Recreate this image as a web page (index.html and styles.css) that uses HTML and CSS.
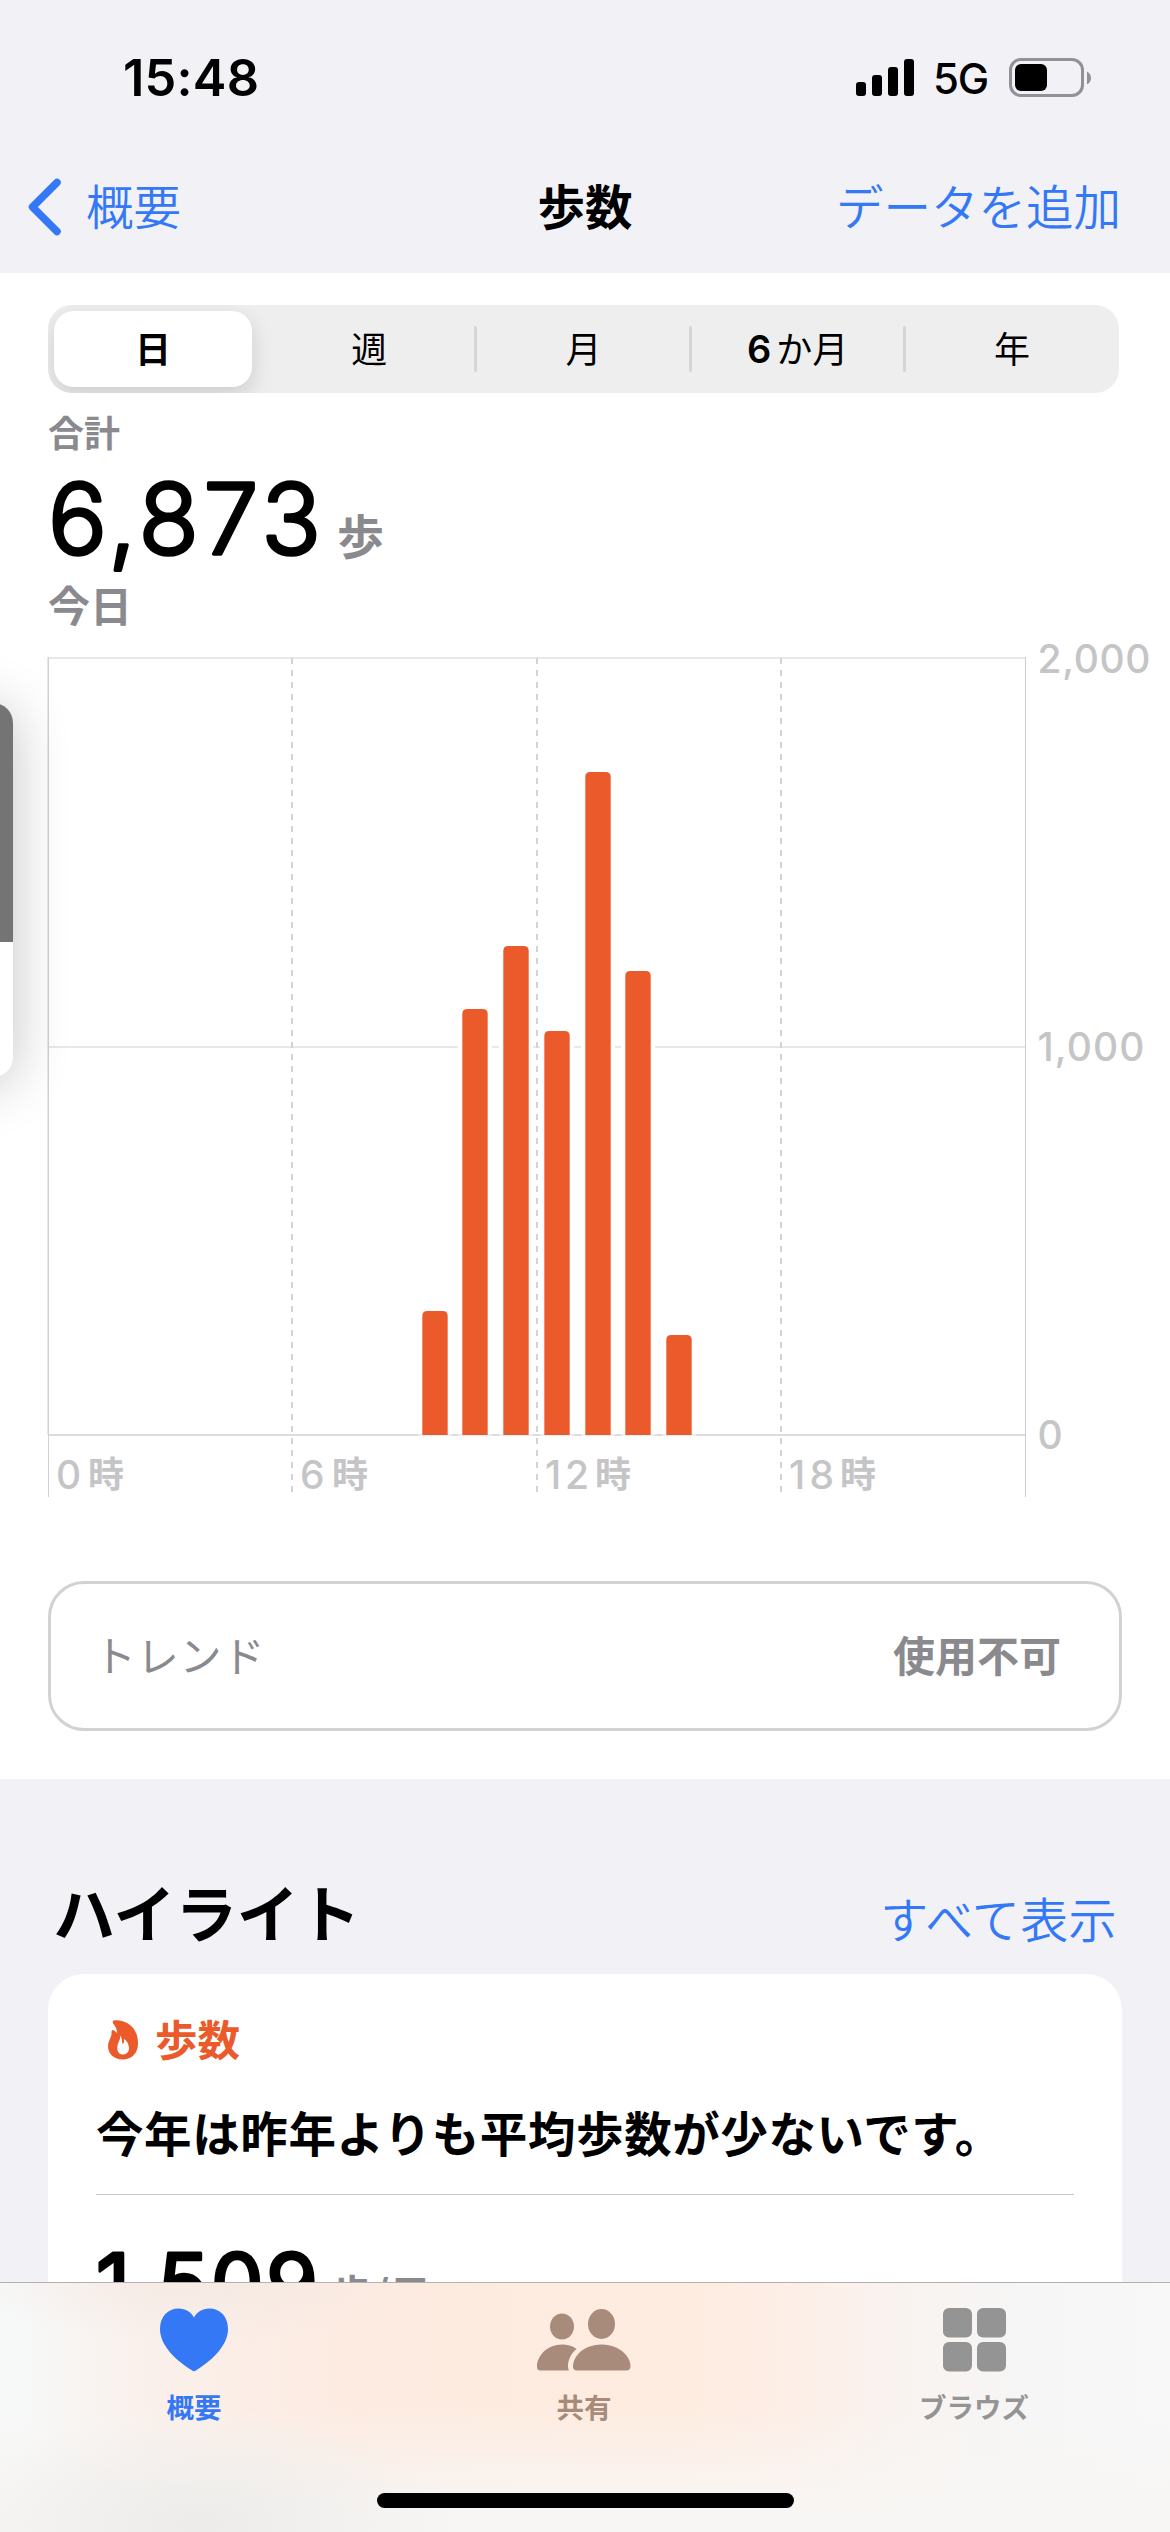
FILE: index.html
```html
<!DOCTYPE html>
<html lang="ja">
<head>
<meta charset="utf-8">
<title>歩数</title>
<link rel="stylesheet" href="styles.css">
</head>
<body>
<div class="screen">
  <header class="top">
    <div class="status">
      <span class="clock">15:48</span>
      <div class="status-right">
        <svg class="signal" viewBox="0 0 58 38" width="58" height="38">
          <rect x="0" y="23" width="10" height="14" rx="3"/>
          <rect x="16" y="16" width="10" height="21" rx="3"/>
          <rect x="32" y="8" width="10" height="29" rx="3"/>
          <rect x="48" y="0" width="10" height="37" rx="3"/>
        </svg>
        <span class="network">5G</span>
        <svg class="battery" viewBox="0 0 83 40" width="83" height="40">
          <rect x="1.5" y="1.5" width="72" height="36" rx="10.5" fill="none" stroke="#929197" stroke-width="3"/>
          <rect x="6" y="6" width="32" height="27" rx="6"/>
          <path d="M78 13.500c5.300 2.500 5.300 10.500 0 13z" fill="#929197"/>
        </svg>
      </div>
    </div>
    <nav class="nav">
      <a class="back">
        <svg viewBox="0 0 36 60" width="36" height="60"><path d="M30 5.500 5.500 30 30 54.500" fill="none" stroke="#3478f6" stroke-width="7.500" stroke-linecap="round" stroke-linejoin="round"/></svg>
        <span>概要</span>
      </a>
      <h1 class="title">歩数</h1>
      <a class="add">データを追加</a>
    </nav>
  </header>

  <main class="panel">
    <div class="segments">
      <span class="seg seg-on">日</span>
      <span class="seg">週</span>
      <span class="seg seg-line">月</span>
      <span class="seg seg-line"><b class="seg-num">6</b>か月</span>
      <span class="seg seg-line">年</span>
    </div>
    <div class="summary">
      <div class="sum-label">合計</div>
      <div class="sum-value">
        <svg class="digits" viewBox="0 0 280 120" width="280" height="120"><text class="big" x="0" y="97.500" font-size="98" textLength="273">6,873</text></svg>
        <span class="unit">歩</span>
      </div>
      <div class="sum-date">今日</div>
    </div>

    <svg class="chart" viewBox="0 630 1170 880" width="1170" height="880">
      <g fill="#e8e8ea">
        <rect x="48" y="657" width="977" height="2"/>
        <rect x="48" y="1046" width="977" height="2"/>
      </g>
      <rect x="48" y="1434" width="977" height="2" fill="#dcdcde"/>
      <rect x="47.500" y="657" width="1.500" height="778" fill="#d1d1d6"/>
      <rect x="48" y="1434" width="1" height="63" fill="#d1d1d6"/>
      <rect x="1025" y="657" width="1" height="840" fill="#cdcdd1"/>
      <g fill="#fff">
        <rect x="458" y="1044" width="34" height="6"/><rect x="499" y="1044" width="34" height="6"/><rect x="540" y="1044" width="34" height="6"/><rect x="581" y="1044" width="34" height="6"/><rect x="621" y="1044" width="34" height="6"/>
      </g>
      <g stroke="#d3d3d7" stroke-width="2" stroke-dasharray="6 6">
        <path d="M292 658V1492"/><path d="M537 658V1492"/><path d="M781 658V1492"/>
      </g>
      <g fill="#fff" opacity=".5">
        <rect x="418" y="1433" width="34" height="4"/><rect x="458" y="1433" width="34" height="4"/><rect x="499" y="1433" width="34" height="4"/><rect x="540" y="1433" width="34" height="4"/><rect x="581" y="1433" width="34" height="4"/><rect x="621" y="1433" width="34" height="4"/><rect x="662" y="1433" width="34" height="4"/>
      </g>
      <g fill="#eb5a2a">
        <path d="M422.300 1435V1316q0-5 5-5h15.400q5 0 5 5V1435z"/>
        <path d="M462.300 1435V1014q0-5 5-5h15.400q5 0 5 5V1435z"/>
        <path d="M503.300 1435V951q0-5 5-5h15.400q5 0 5 5V1435z"/>
        <path d="M544.300 1435V1036q0-5 5-5h15.400q5 0 5 5V1435z"/>
        <path d="M585.300 1435V777q0-5 5-5h15.400q5 0 5 5V1435z"/>
        <path d="M625.300 1435V976q0-5 5-5h15.400q5 0 5 5V1435z"/>
        <path d="M666.300 1435V1340q0-5 5-5h15.400q5 0 5 5V1435z"/>
      </g>
      <g class="axis">
        <text x="1037.500" y="673" textLength="113">2,000</text>
        <text x="1037.500" y="1061" textLength="107">1,000</text>
        <text x="1037.500" y="1449">0</text>
        <text x="56" y="1488.500">0</text><text class="axis-ja" x="88" y="1488">時</text>
        <text x="300" y="1488.500">6</text><text class="axis-ja" x="332" y="1488">時</text>
        <text x="545" y="1488.500" textLength="44">12</text><text class="axis-ja" x="595" y="1488">時</text>
        <text x="789" y="1488.500" textLength="45">18</text><text class="axis-ja" x="840" y="1488">時</text>
      </g>
    </svg>

    <div class="trend"><span class="trend-name">トレンド</span><span class="trend-state">使用不可</span></div>
  </main>

  <section class="highlights">
    <div class="hl-head"><h2 class="hl-title">ハイライト</h2><a class="hl-all">すべて表示</a></div>
    <article class="card">
      <div class="card-kind">
        <svg viewBox="0 0 30 40" width="30" height="40"><path fill="#eb5a2a" fill-rule="evenodd" d="M4.800 1.500C5 .3 6.300.1 8 .2 21 .6 30 9 30 23.500 30 33 24 39.500 14.800 39.500 6 39.500 0 34 0 26c0-4.500 2.600-7.500 3.400-11 .3-1.600-.1-3.200.3-4.300.4-1 2-.6 2.800.1 1 .7 1.800 1.600 2.500 2.300C9 8.500 7 6 5.200 3.800 4.700 3 4.700 2.200 4.800 1.500zM12.200 15.500c.4 2.500-.8 4.700-1.600 6.700-.8 2-1.400 3.800-1.400 5.800 0 4 2.300 6.500 5.800 6.500s6-2.500 6-6.300c0-3.200-1.800-7.500-5-9.500.3 2 0 3.700-.8 5.300-.6-.3-1.100-.9-1.200-1.700.2-2.600-.3-5-1.800-6.800z"/></svg>
        <span>歩数</span>
      </div>
      <p class="card-text">今年は昨年よりも平均歩数が少ないです。</p>
      <div class="card-stat">
        <svg viewBox="0 0 232 90" width="232" height="90"><text class="big stat" x="0" y="80.500" font-size="84" textLength="222">1,509</text></svg>
        <span class="stat-unit">歩/日</span>
      </div>
    </article>
  </section>

  <div class="peek"><div class="peek-image"></div></div>

  <footer class="tabbar">
    <div class="tabs">
      <a class="tab tab-on">
        <svg viewBox="0 0 68 64" width="68" height="64"><path fill="#3478f6" d="M34 63.200c-1 0-2-.7-3-1.400C14 51 0 36.500 0 21 0 8.500 8 .5 18.500.5 26 .5 31 4 34 9.500 37 4 42 .5 49.500.5 60 .5 68 8.500 68 21 68 36.500 54 51 37 61.800c-1 .7-2 1.400-3 1.400z"/></svg>
        <span>概要</span>
      </a>
      <a class="tab tab-share">
        <svg viewBox="0 0 94 64" width="94" height="64" fill="#a88b7a"><ellipse cx="25" cy="18.500" rx="12" ry="13"/><ellipse cx="64.500" cy="16" rx="13.500" ry="15"/><path d="M3.500 62.500C1 62.500 0 61 0 58.500 0 48 10 36.500 25 36.500c6 0 11 1.700 14.500 4.500C34 45.500 31 52 31 58c0 2 .3 3.300 1 4.500z"/><path d="M40 62.500c-3 0-4-1.500-4-4C36 48 47 36.500 64.500 36.500S93.500 48 93.500 58.500c0 2.500-1.500 4-4.500 4z"/></svg>
        <span>共有</span>
      </a>
      <a class="tab tab-browse">
        <svg viewBox="0 0 63 64" width="63" height="64" fill="#959494"><rect x="0" y="0" width="29" height="29.500" rx="6"/><rect x="34" y="0" width="29" height="29.500" rx="6"/><rect x="0" y="34" width="29" height="29.500" rx="6"/><rect x="34" y="34" width="29" height="29.500" rx="6"/></svg>
        <span>ブラウズ</span>
      </a>
    </div>
    <div class="home"></div>
  </footer>
</div>
</body>
</html>
```
FILE: styles.css
```css
* { box-sizing: border-box; }
body {
  margin: 0;
  background: #f2f1f6;
  color: #000;
  font-family: "Noto Sans CJK JP", Inter, sans-serif;
}
.screen {
  position: relative;
  width: 1170px;
  height: 2532px;
  overflow: hidden;
  background: #f2f1f6;
}
h1, h2, p { margin: 0; }
svg { display: block; flex: none; overflow: visible; }

.status {
  display: flex;
  justify-content: space-between;
  height: 141px;
  padding: 48px 78px 0 123px;
}
.clock {
  font: 600 50.500px/60px Inter, sans-serif;
  letter-spacing: 0.2px;
}
.status-right { display: flex; }
.signal { margin: 11px 19px 0 0; }
.network {
  width: 76px;
  font: 500 42px/62px Inter, sans-serif;
  letter-spacing: -1.2px;
}
.battery { margin-top: 10px; }

.nav {
  display: grid;
  grid-template-columns: 1fr auto 1fr;
  align-items: center;
  height: 132px;
  padding: 0 49px 0 27px;
  color: #3478f6;
  font-size: 47.5px;
  line-height: 70px;
}
.nav span, .title, .add { padding-bottom: 5px; }
.back { display: flex; align-items: center; gap: 23px; font-weight: 350; }
.title { color: #000; font-size: 47.5px; font-weight: 700; padding-left: 22px; }
.add { justify-self: end; font-weight: 350; }

.panel {
  height: 1506px;
  padding-top: 32px;
  background: #fff;
}
.segments {
  display: grid;
  grid-template-columns: repeat(5, 1fr);
  width: 1071px;
  height: 88px;
  margin-left: 48px;
  border-radius: 24px;
  background: #eeeeef;
  font-size: 36px;
  line-height: 84px;
  text-align: center;
  overflow: hidden;
}
.seg { position: relative; }
.seg-on {
  height: 76px;
  margin: 6px 10px 0 6px;
  border-radius: 20px;
  background: #fff;
  box-shadow: 0 8px 22px rgba(0, 0, 0, .14);
  font-weight: 700;
  line-height: 72px;
}
.seg-line::before {
  content: "";
  position: absolute;
  left: -2px;
  top: 21px;
  width: 3px;
  height: 46px;
  border-radius: 2px;
  background: #d5d5d8;
}
.seg-num { margin-right: 5px; font: 600 38px/84px Inter, sans-serif; }

.summary { height: 237px; padding: 13px 48px 0; color: #8a8a8e; font-weight: 700; }
.sum-label { height: 50px; font-size: 36px; line-height: 50px; }
.sum-value { display: flex; height: 120px; }
.digits { margin-right: 9px; }
.unit { font-size: 47px; line-height: 156px; }
.sum-date { height: 54px; font-size: 42px; line-height: 56px; }
.big {
  fill: #000;
  stroke: #000;
  stroke-width: 3.500px;
  stroke-linejoin: round;
  font-family: Inter, sans-serif;
  font-weight: 300;
}
.stat { stroke-width: 3px; font-weight: 400; }

.axis { fill: #c5c5c7; font: 500 39px Inter, sans-serif; }
.axis-ja { font: 700 36px "Noto Sans CJK JP", sans-serif; }

.trend {
  display: flex;
  justify-content: space-between;
  width: 1074px;
  height: 150px;
  margin: 71px 0 0 48px;
  padding: 0 58px 0 43px;
  border: 3px solid #d1d1d6;
  border-radius: 36px;
  color: #8a8a8e;
  font-size: 42px;
  line-height: 139px;
}
.trend-name { letter-spacing: 0.8px; }
.trend-state { font-weight: 700; }

.hl-head {
  display: flex;
  align-items: baseline;
  justify-content: space-between;
  height: 195px;
  padding: 87px 53px 0 53px;
}
.hl-title { font-size: 62px; font-weight: 700; line-height: 90px; letter-spacing: -0.3px; }
.hl-all { color: #3478f6; font-size: 48px; font-weight: 350; letter-spacing: 0.4px; }
.card {
  width: 1074px;
  height: 700px;
  margin-left: 48px;
  padding: 34px 48px 0;
  border-radius: 36px;
  background: #fff;
}
.card-kind {
  display: flex;
  align-items: center;
  gap: 17px;
  height: 60px;
  padding-left: 12px;
  color: #eb5a2a;
  font-size: 42.500px;
  font-weight: 700;
  line-height: 60px;
}
.card-kind span { padding-bottom: 1px; }
.card-kind svg { margin-top: 4px; }
.card-text {
  margin-top: 28px;
  padding-bottom: 28px;
  border-bottom: 1px solid #c6c6c8;
  font-size: 47.5px;
  font-weight: 700;
  line-height: 71px;
  height: 99px;
  letter-spacing: 0.6px;
  white-space: nowrap;
}
.card-stat { display: flex; padding-top: 38px; }
.stat-unit { margin-left: 3px; color: #8a8a8e; font-size: 42px; font-weight: 700; line-height: 119px; }

.peek {
  position: absolute;
  left: -187px;
  top: 703px;
  width: 200px;
  height: 374px;
  border-radius: 20px;
  background: #fff;
  box-shadow: 0 6px 56px rgba(0, 0, 0, .24);
  overflow: hidden;
}
.peek-image { height: 239px; background: #747474; }

.tabbar {
  position: absolute;
  left: 0;
  bottom: 0;
  width: 1170px;
  height: 250px;
  border-top: 1px solid #b2b0b1;
  background:
    radial-gradient(ellipse 260px 110px at 200px 240px, rgba(236, 235, 233, .95), rgba(236, 235, 233, 0)),
    radial-gradient(ellipse 230px 60px at 200px 0, rgba(244, 233, 227, .8), rgba(244, 233, 227, 0)),
    linear-gradient(to bottom, rgba(248, 247, 246, 0) 50%, #f8f6f4 92%),
    linear-gradient(to right, #f7f8f8 2%, #faf0eb 13%, #fdebe1 30%, #feece0 58%, #fdeee6 67%, #f9f3f0 77%, #f6f6f6 88%, #f8f8f9 100%);
}
.tabs {
  display: grid;
  grid-template-columns: repeat(3, 390px);
  margin-left: -1px;
  padding-top: 25px;
}
.tab {
  display: flex;
  flex-direction: column;
  align-items: center;
  gap: 14px;
  font-size: 27.500px;
  font-weight: 700;
  line-height: 40px;
}
.tab-on { color: #3478f6; }
.tab-share { color: #a88b7a; }
.tab-browse { color: #959494; }
.home {
  width: 417px;
  height: 15px;
  margin: 67px auto 0;
  border-radius: 8px;
  background: #000;
}
```
